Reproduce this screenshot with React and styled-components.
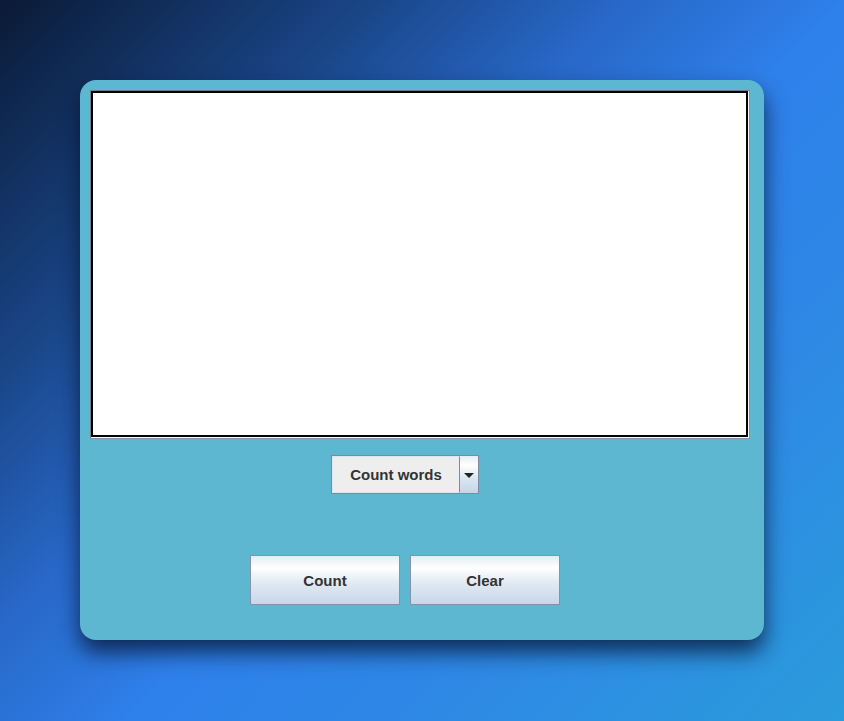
import React, { useState } from 'react';
import styled, { createGlobalStyle } from 'styled-components';

const GlobalStyle = createGlobalStyle`
  html, body {
    margin: 0;
    padding: 0;
  }
  body {
    min-height: 100vh;
    background: linear-gradient(135deg, #0a1a36 0%, #1a4688 24%, #2868c8 40%, #2e80ea 54%, #2e88e6 72%, #2b9bdb 100%);
    font-family: 'Liberation Sans', Arial, sans-serif;
  }
`;

const Page = styled.div`
  padding: 80px 0 0 80px;
`;

// Main rounded panel
const Panel = styled.div`
  width: 684px;
  height: 560px;
  box-sizing: border-box;
  padding: 10px 14px 36px 10px;
  background-color: #5db7d1;
  border-radius: 16px;
  box-shadow: 0 12px 22px rgba(5, 18, 48, 0.78);
  display: flex;
  flex-direction: column;
`;

const TextFrame = styled.div`
  width: 660px;
  height: 349px;
  flex-shrink: 0;
  box-sizing: border-box;
  border: 1px solid #8593a3;
  border-top-color: #6f7f8f;
  border-left-color: #6f7f8f;
  padding: 0 1px 1px 0;
  background-color: #f4f8fb;
`;

const TextArea = styled.textarea`
  display: block;
  width: 100%;
  height: 100%;
  box-sizing: border-box;
  margin: 0;
  border: 2px solid #000000;
  background-color: #ffffff;
  resize: none;
  outline: none;
  padding: 4px;
  font-family: 'Liberation Sans', Arial, sans-serif;
  font-size: 14px;
`;

const Row = styled.div`
  display: flex;
  justify-content: center;
  gap: ${(p) => p.$gap || 0}px;
  margin-top: ${(p) => p.$top}px;
  width: 630px;
  flex-shrink: 0;
`;

const Select = styled.div`
  display: flex;
  height: 39px;
  box-sizing: border-box;
  border: 1px solid #7c8ca0;
`;

const SelectValue = styled.div`
  width: 128px;
  display: flex;
  align-items: center;
  justify-content: center;
  background-color: #eeeeee;
  border: 1px solid #dde6ef;
  border-right: 1px solid #7c8ca0;
  box-sizing: border-box;
  font-size: 15px;
  font-weight: bold;
  color: #333333;
`;

const ArrowButton = styled.div`
  width: 18px;
  display: flex;
  align-items: center;
  justify-content: center;
  padding-top: 2px;
  box-sizing: border-box;
  background: linear-gradient(to bottom, #e6edf5 0%, #ffffff 25%, #dbe6f1 60%, #c4d5e7 100%);
`;

const Arrow = styled.span`
  width: 0;
  height: 0;
  border-left: 5px solid transparent;
  border-right: 5px solid transparent;
  border-top: 5px solid #222222;
`;

const Button = styled.button`
  width: 150px;
  height: 50px;
  box-sizing: border-box;
  border: 1px solid #8393a8;
  border-radius: 0;
  padding: 0;
  background: linear-gradient(to bottom, #e4ecf5 0%, #ffffff 25%, #e2eaf3 55%, #c6d7e9 100%);
  font-family: 'Liberation Sans', Arial, sans-serif;
  font-size: 15px;
  font-weight: bold;
  color: #333333;
  cursor: pointer;
`;

const App = () => {
  const [text, setText] = useState('');

  return (
    <>
      <GlobalStyle />
      <Page>
        <Panel>
          <TextFrame>
            <TextArea value={text} onChange={(e) => setText(e.target.value)} />
          </TextFrame>
          <Row $top={16}>
            <Select>
              <SelectValue>Count words</SelectValue>
              <ArrowButton>
                <Arrow />
              </ArrowButton>
            </Select>
          </Row>
          <Row $top={61} $gap={10}>
            <Button>Count</Button>
            <Button onClick={() => setText('')}>Clear</Button>
          </Row>
        </Panel>
      </Page>
    </>
  );
};

export default App;
